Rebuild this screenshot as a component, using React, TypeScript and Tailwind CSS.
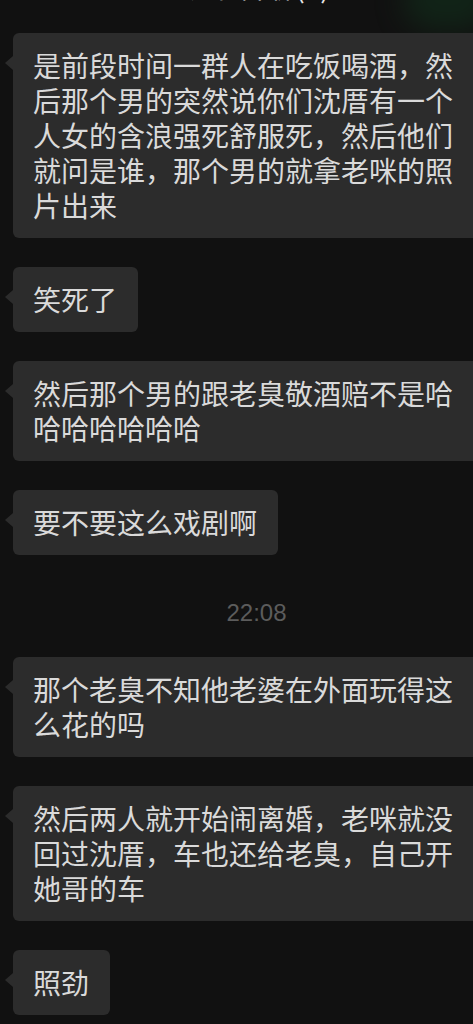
import React from "react";

const font = { fontFamily: '"Noto Sans CJK SC", "Noto Sans", sans-serif' };

const Bubble = ({ text }: { text: string }) => (
	<div className="relative w-max shrink-0 rounded-[6px] bg-[#2c2c2c] py-[15px] pl-[20px] pr-[21px] text-[28px] leading-[35px] text-[#dadada]">
		{/* tail */}
		<span className="absolute left-[-8px] top-[23px] h-0 w-0 border-y-[7px] border-r-[8px] border-y-transparent border-r-[#2c2c2c]" />
		<div className="max-w-[424px]">{text}</div>
	</div>
);

const messages = [
	"是前段时间一群人在吃饭喝酒，然后那个男的突然说你们沈厝有一个人女的含浪强死舒服死，然后他们就问是谁，那个男的就拿老咪的照片出来",
	"笑死了",
	"然后那个男的跟老臭敬酒赔不是哈哈哈哈哈哈哈",
	"要不要这么戏剧啊",
];

const later = [
	"那个老臭不知他老婆在外面玩得这么花的吗",
	"然后两人就开始闹离婚，老咪就没回过沈厝，车也还给老臭，自己开她哥的车",
	"照劲",
];

export default function App() {
	return (
		<div
			className="h-[1024px] w-[473px] overflow-hidden bg-[#111111]"
			style={font}
		>
			{/* header, mostly scrolled out */}
			<div className="relative h-[33px] overflow-hidden">
				<div className="absolute right-[-20px] top-[-30px] h-[60px] w-[90px] rounded-full bg-[#12301c] opacity-60 blur-[14px]" />
				<div className="-mt-[30px] pl-[40px] text-center text-[28px] leading-[32px] text-[#e8e8e8]">
					沈厝群聊(3)
				</div>
			</div>

			<div className="flex flex-col items-start gap-[29px] pl-[13px]">
				{messages.map((m, i) => (
					<Bubble key={i} text={m} />
				))}
			</div>

			<div
				className="flex h-[102px] items-center justify-center pl-[40px] pt-[14px] text-[24px] leading-[30px] text-[#5c5c5c]"
				style={{ fontFamily: '"Liberation Sans", Arial, sans-serif' }}
			>
				22:08
			</div>

			<div className="flex flex-col items-start gap-[29px] pl-[13px]">
				{later.map((m, i) => (
					<Bubble key={i} text={m} />
				))}
			</div>
		</div>
	);
}
